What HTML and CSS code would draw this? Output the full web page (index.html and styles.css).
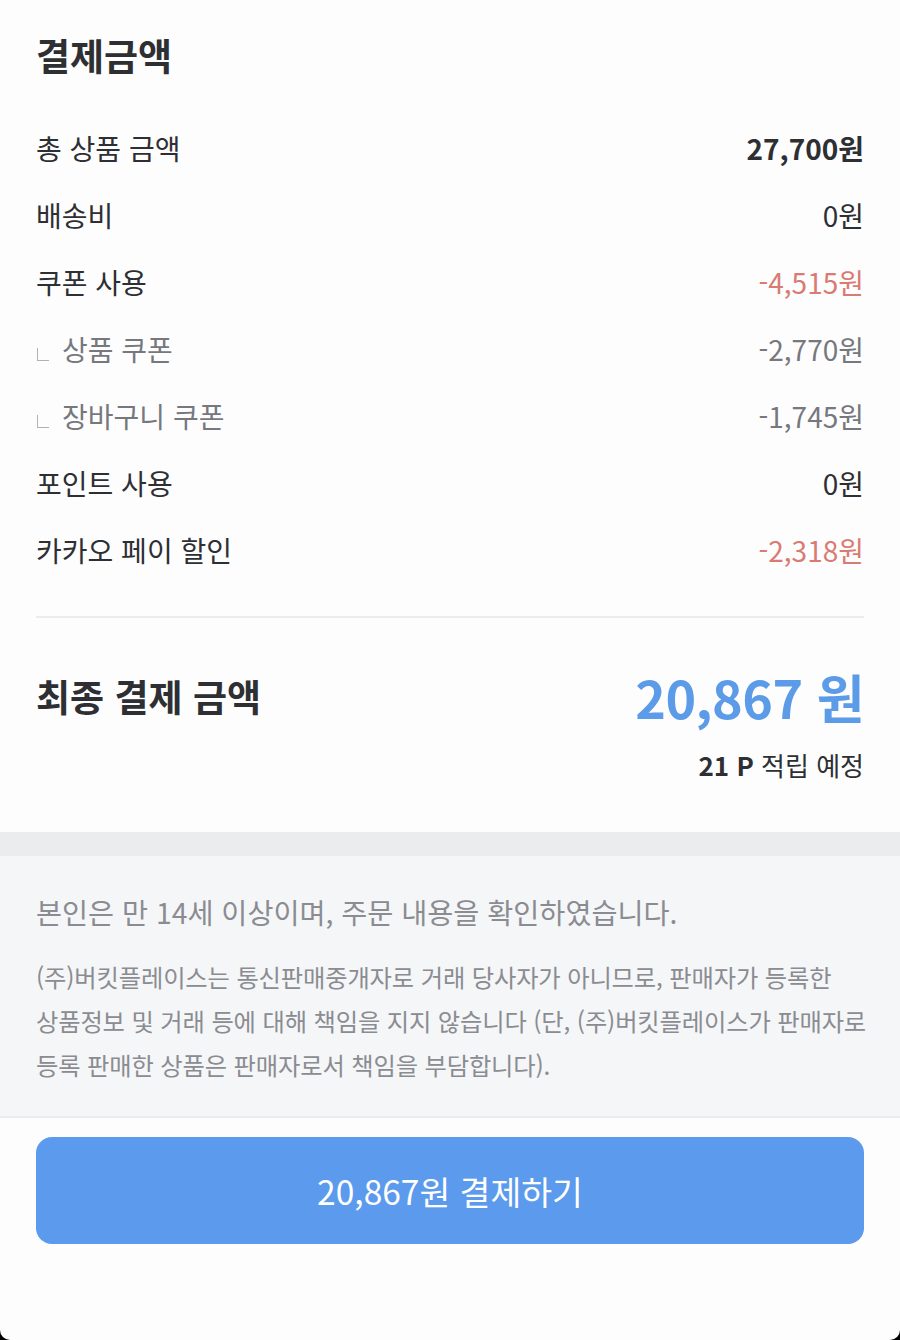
FILE: index.html
```html
<!DOCTYPE html>
<html lang="ko">

<head>
  <meta charset="UTF-8">
  <meta name="viewport" content="width=device-width, initial-scale=1.0">
  <title>결제금액</title>
  <link rel="stylesheet" href="styles.css">
</head>

<body>
  <div class="page">
    <section class="summary">
      <h2 class="title">결제금액</h2>

      <ul class="rows">
        <li class="row">
          <span>총 상품 금액</span>
          <span class="strong">27,700원</span>
        </li>
        <li class="row">
          <span>배송비</span>
          <span>0원</span>
        </li>
        <li class="row">
          <span>쿠폰 사용</span>
          <span class="minus">-4,515원</span>
        </li>
        <li class="row sub">
          <span><i class="mark"></i>상품 쿠폰</span>
          <span>-2,770원</span>
        </li>
        <li class="row sub">
          <span><i class="mark"></i>장바구니 쿠폰</span>
          <span>-1,745원</span>
        </li>
        <li class="row">
          <span>포인트 사용</span>
          <span>0원</span>
        </li>
        <li class="row">
          <span>카카오 페이 할인</span>
          <span class="minus">-2,318원</span>
        </li>
      </ul>

      <div class="divider"></div>

      <div class="total">
        <span class="total-label">최종 결제 금액</span>
        <span class="total-price">20,867 원</span>
      </div>
      <div class="points"><b>21 P</b> 적립 예정</div>
    </section>

    <div class="band"></div>

    <section class="notice">
      <p class="agree">본인은 만 14세 이상이며, 주문 내용을 확인하였습니다.</p>
      <p class="terms">(주)버킷플레이스는 통신판매중개자로 거래 당사자가 아니므로, 판매자가 등록한<br>상품정보 및 거래 등에 대해 책임을 지지 않습니다 (단, (주)버킷플레이스가 판매자로<br>등록 판매한 상품은 판매자로서 책임을 부담합니다).</p>
    </section>

    <div class="action">
      <button class="pay">20,867원 결제하기</button>
    </div>
  </div>
</body>

</html>
```

FILE: styles.css
```css
body {
  margin: 0;
  background: #000;
  font-family: "Noto Sans CJK KR", "Noto Sans", sans-serif;
  color: #2e2f33;
}

.page {
  height: 1340px;
  background-color: #fdfdfe;
  border-radius: 0 0 10px 10px;
  overflow: hidden;
}

.summary {
  padding: 30px 36px 49px;
}

.title {
  margin: 0;
  font-size: 37px;
  line-height: 50px;
  font-weight: 700;
}

.rows {
  list-style: none;
  margin: 34px 0 0;
  padding: 0;
}

.row {
  display: flex;
  justify-content: space-between;
  align-items: center;
  height: 67px;
  font-size: 28px;
}

.row .strong {
  font-weight: 700;
}

.row .minus {
  color: #d97b73;
}

.row.sub {
  color: #76787d;
}

.mark {
  display: inline-block;
  width: 11px;
  height: 12px;
  margin: 0 13px 0 1px;
  border-left: 1.5px solid #b0b2b6;
  border-bottom: 1.5px solid #b0b2b6;
  vertical-align: 0;
}

.divider {
  height: 2px;
  margin-top: 33px;
  background-color: #ececee;
}

.total {
  display: flex;
  justify-content: space-between;
  align-items: center;
  height: 70px;
  margin-top: 43px;
}

.total-label {
  font-size: 37px;
  font-weight: 700;
}

.total-price {
  font-size: 52px;
  font-weight: 700;
  color: #5c9be8;
  letter-spacing: -0.5px;
}

.points {
  margin-top: 16px;
  text-align: right;
  font-size: 26px;
  line-height: 36px;
}

.points b {
  font-weight: 700;
}

.band {
  height: 24px;
  background-color: #ebecee;
}

.notice {
  background-color: #f5f6f8;
  padding: 36px 36px 29px;
  border-bottom: 2px solid #ebecee;
  color: #8a8c91;
}

.agree {
  margin: 0;
  font-size: 28.3px;
  line-height: 40px;
}

.terms {
  margin: 23px 0 0;
  font-size: 24.3px;
  line-height: 44px;
  letter-spacing: -0.15px;
  white-space: nowrap;
}

.action {
  padding: 19px 36px 0;
}

.pay {
  display: block;
  width: 100%;
  height: 107px;
  border: none;
  border-radius: 16px;
  background-color: #5b9aec;
  color: #fff;
  font-family: inherit;
  font-size: 33.5px;
  cursor: pointer;
}
```
